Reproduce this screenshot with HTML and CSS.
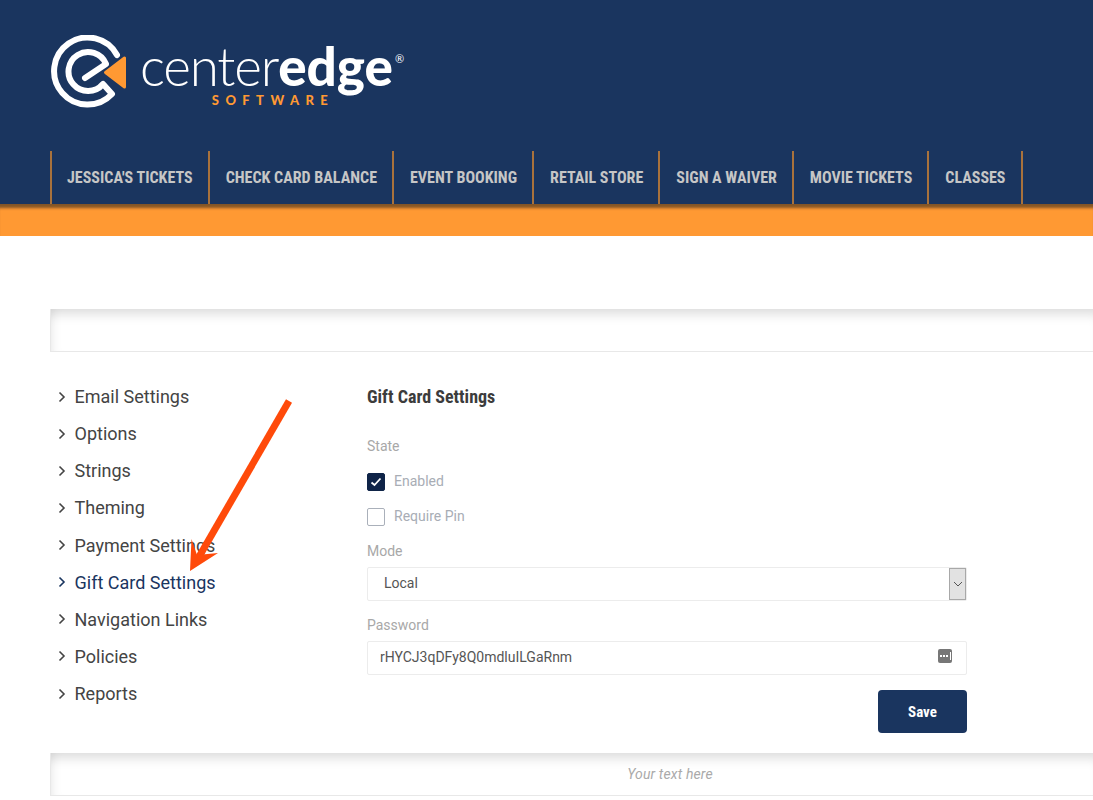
FILE: index.html
```html
<!DOCTYPE html>
<html lang="en">
<head>
<meta charset="utf-8">
<title>CenterEdge Software</title>
<link rel="stylesheet" href="styles.css">
</head>
<body>
<header class="header">
  <div class="logo">
    <svg class="logo-mark" width="80" height="76" viewBox="50 33 80 76" aria-hidden="true">
      <path class="logo-ring" d="M117 53A33.500 33.500 0 1 0 112 92L103 82A19.500 19.500 0 1 1 106 62L85 76"/>
      <path class="logo-tip" d="M105.500 70.500L124.500 56V85Z"/>
    </svg>
    <div class="wordmark">
      <div class="wordmark-name"><span class="thin">center</span><span class="bold">edge</span><sup class="reg">®</sup></div>
      <div class="wordmark-sub">SOFTWARE</div>
    </div>
  </div>
  <nav class="nav">
    <a class="nav-item">JESSICA'S TICKETS</a>
    <a class="nav-item">CHECK CARD BALANCE</a>
    <a class="nav-item">EVENT BOOKING</a>
    <a class="nav-item">RETAIL STORE</a>
    <a class="nav-item">SIGN A WAIVER</a>
    <a class="nav-item">MOVIE TICKETS</a>
    <a class="nav-item">CLASSES</a>
  </nav>
</header>
<div class="strip"></div>
<main class="page">
  <div class="panel"></div>
  <div class="content">
    <ul class="side">
      <li class="side-item"><svg class="chev" width="8" height="12" viewBox="0 0 8 12"><path d="M1.500 1.500L6 6L1.500 10.500"/></svg>Email Settings</li>
      <li class="side-item"><svg class="chev" width="8" height="12" viewBox="0 0 8 12"><path d="M1.500 1.500L6 6L1.500 10.500"/></svg>Options</li>
      <li class="side-item"><svg class="chev" width="8" height="12" viewBox="0 0 8 12"><path d="M1.500 1.500L6 6L1.500 10.500"/></svg>Strings</li>
      <li class="side-item"><svg class="chev" width="8" height="12" viewBox="0 0 8 12"><path d="M1.500 1.500L6 6L1.500 10.500"/></svg>Theming</li>
      <li class="side-item"><svg class="chev" width="8" height="12" viewBox="0 0 8 12"><path d="M1.500 1.500L6 6L1.500 10.500"/></svg>Payment Settings</li>
      <li class="side-item active"><svg class="chev" width="8" height="12" viewBox="0 0 8 12"><path d="M1.500 1.500L6 6L1.500 10.500"/></svg>Gift Card Settings</li>
      <li class="side-item"><svg class="chev" width="8" height="12" viewBox="0 0 8 12"><path d="M1.500 1.500L6 6L1.500 10.500"/></svg>Navigation Links</li>
      <li class="side-item"><svg class="chev" width="8" height="12" viewBox="0 0 8 12"><path d="M1.500 1.500L6 6L1.500 10.500"/></svg>Policies</li>
      <li class="side-item"><svg class="chev" width="8" height="12" viewBox="0 0 8 12"><path d="M1.500 1.500L6 6L1.500 10.500"/></svg>Reports</li>
    </ul>
    <section class="form">
      <h2 class="form-title">Gift Card Settings</h2>
      <div class="label state-label">State</div>
      <div class="check-row">
        <span class="box checked"><svg width="12" height="10" viewBox="0 0 12 10"><path d="M1.500 5.500L4.500 8L10.500 1.500"/></svg></span>
        <span class="check-text">Enabled</span>
      </div>
      <div class="check-row">
        <span class="box"></span>
        <span class="check-text">Require Pin</span>
      </div>
      <div class="label mode-label">Mode</div>
      <div class="field select-field">
        <span>Local</span>
        <span class="select-btn"><svg width="10" height="6" viewBox="0 0 10 6"><path d="M1 1L5 5L9 1"/></svg></span>
      </div>
      <div class="label pass-label">Password</div>
      <div class="field pass-field">
        <span>rHYCJ3qDFy8Q0mdluILGaRnm</span>
        <svg class="dots" width="14" height="14" viewBox="0 0 14 14"><rect class="dots-bg" width="14" height="14" rx="2"/><path class="dots-fg" d="M2 6h2v2H2zM5 6h2v2H5zM8 6h2v2H8zM12 3h1v8h-1z"/></svg>
      </div>
      <div class="actions"><button class="save" type="button">Save</button></div>
    </section>
  </div>
  <div class="panel footer-panel"><span class="footer-text">Your text here</span></div>
</main>
<svg class="arrow" width="120" height="190" viewBox="0 0 120 190" aria-hidden="true">
  <path class="arrow-line" d="M109 7L16 168"/>
  <path class="arrow-head" d="M10 177L11.500 145L17 161L38 159Z"/>
</svg>
</body>
</html>
```

FILE: styles.css
```css
* { box-sizing: border-box; }
html, body { margin: 0; padding: 0; }
body {
  position: relative;
  height: 800px;
  overflow: hidden;
  background: #fff;
  font-family: Roboto, "Liberation Sans", sans-serif;
  color: #444;
}
.header {
  background: #1a355f;
  height: 204px;
  padding: 35px 0 0 50px;
}
.logo { display: flex; align-items: flex-start; height: 116px; }
.logo-mark { flex: none; }
.logo-ring { fill: none; stroke: #fff; stroke-width: 6; stroke-linejoin: round; stroke-linecap: round; }
.logo-tip { fill: #ff9933; stroke: #ff9933; stroke-width: 3; stroke-linejoin: round; }
.wordmark { margin-left: 10px; width: 265px; text-align: center; font-family: Lato, sans-serif; }
.wordmark-name { font-size: 53px; line-height: 46px; color: #fff; white-space: nowrap; text-align: left; margin-top: 8px; }
.thin { font-weight: 300; letter-spacing: -1.200px; }
.bold { font-weight: 900; }
.reg { font-size: 11px; vertical-align: 23px; line-height: 0; font-weight: 400; margin-left: 2px; }
.wordmark-sub { color: #ff9933; font-size: 13px; font-weight: 900; letter-spacing: 6.400px; line-height: 14px; margin: 4px 0 0 1px; }
.nav { display: flex; height: 53px; border-left: 2px solid #a9723c; width: max-content; }
.nav-item {
  display: flex;
  align-items: center;
  padding: 0 15px 1px 16px;
  border-right: 2px solid #a9723c;
  color: #c6c6c6;
  font-size: 16px;
  font-weight: 700;
  font-stretch: 75%;
  white-space: nowrap;
}
.nav-item:first-child { padding-left: 15px; }
.strip {
  height: 32px;
  background: #ff9933;
  box-shadow: inset 0 6px 3px -2px rgba(50, 40, 30, .6);
}
.page { padding: 73px 0 0 50px; }
.panel {
  height: 43px;
  border: 1px solid #e8e8e8;
  border-top: 0;
  border-right: 0;
  background: #fff;
  box-shadow: inset 0 13px 12px -8px rgba(0, 0, 0, .14), inset 10px 0 12px -10px rgba(0, 0, 0, .1);
}
.content { display: flex; padding-top: 26px; height: 401px; }
.side { list-style: none; margin: 0; padding: .08px 0 0 8px; width: 317px; flex: none; }
.side-item { display: flex; align-items: center; height: 37.120px; font-size: 18px; color: #444; }
.side-item.active { color: #1a355f; }
.chev { margin-right: 8.500px; flex: none; }
.chev path { fill: none; stroke: #444; stroke-width: 1.600; }
.active .chev path { stroke: #1a355f; }
.form { width: 600px; flex: none; }
.form-title { margin: 9px 0 0; font-size: 18px; line-height: 20px; font-weight: 700; font-stretch: 75%; color: #3c3c3c; }
.label { font-size: 14px; line-height: 16px; color: #a8a8a8; }
.state-label { margin-top: 31px; }
.check-row { display: flex; align-items: center; height: 19px; margin-top: 16px; }
.state-label + .check-row { margin-top: 18px; }
.box { width: 18px; height: 18px; border: 1px solid #aab0ba; border-radius: 2px; display: flex; align-items: center; justify-content: center; background: #fff; }
.box.checked { background: #0f2448; border-color: #0f2448; }
.box svg path { fill: none; stroke: #fff; stroke-width: 1.800; }
.check-text { margin-left: 9px; font-size: 14px; line-height: 16px; margin-top: -2px; color: #a8adb5; }
.mode-label { margin-top: 17px; }
.field {
  display: flex;
  align-items: center;
  justify-content: space-between;
  height: 34px;
  margin-top: 8px;
  border: 1px solid #ececec;
  border-radius: 2px;
  font-size: 14px;
  color: #555;
}
.select-field { padding-left: 16px; }
.select-field > span:first-child { margin-top: -3px; }
.select-btn {
  width: 17px;
  height: 32px;
  display: flex;
  align-items: center;
  justify-content: center;
  background: #e2e2e2;
  border: 1px solid #a8a8a8;
}
.select-btn path { fill: none; stroke: #555; stroke-width: 1; }
.pass-label { margin-top: 16px; }
.pass-field { padding: 0 14px 0 12px; }
.pass-field > span { margin-top: -3px; }
.dots { margin-top: -4px; }
.dots-bg { fill: #777; }
.dots-fg { fill: #fff; }
.actions { display: flex; justify-content: flex-end; margin-top: 15px; }
.save {
  width: 89px;
  height: 43px;
  border: 0;
  border-radius: 4px;
  background: #1a355f;
  color: #fff;
  font-family: inherit;
  font-size: 15px;
  font-weight: 700;
  font-stretch: 75%;
}
.footer-panel { display: flex; align-items: center; justify-content: center; height: 43px; padding-left: 196px; }
.footer-text { font-size: 14px; font-style: italic; letter-spacing: .15px; color: #aaa; }
.arrow { position: absolute; left: 180px; top: 394px; }
.arrow-line { fill: none; stroke: #ff4a0a; stroke-width: 7; }
.arrow-head { fill: #ff4a0a; }
```
